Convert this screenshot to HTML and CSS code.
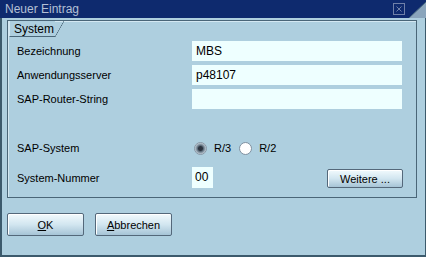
FILE: index.html
```html
<!DOCTYPE html>
<html lang="de">
<head>
    <meta charset="UTF-8">
    <title>Neuer Eintrag</title>
    <link rel="stylesheet" href="styles.css">
</head>
<body>
    <div class="window">
        <div class="title-bar">
            <span class="title">Neuer Eintrag</span>
            <span class="close-box">
                <svg width="12" height="12" viewBox="0 0 12 12">
                    <rect x="0.5" y="0.5" width="11" height="11" fill="none" stroke="#6f80a8"/>
                    <path d="M3.5 3.5 L8.5 8.5 M8.5 3.5 L3.5 8.5" stroke="#6f80a8" stroke-width="1"/>
                </svg>
            </span>
        </div>
        <svg class="corner" width="18" height="18" viewBox="0 0 18 18">
            <polygon points="18,2 18,18 1,18" fill="#8aa5bc"/>
            <line x1="18" y1="2" x2="1" y2="18" stroke="#4a6a80" stroke-width="1"/>
        </svg>

        <div class="content">
            <div class="group">
                <div class="tab">System</div>

                <div class="row">
                    <label>Bezeichnung</label>
                    <div class="field wide">MBS</div>
                </div>
                <div class="row">
                    <label>Anwendungsserver</label>
                    <div class="field wide">p48107</div>
                </div>
                <div class="row">
                    <label>SAP-Router-String</label>
                    <div class="field wide"></div>
                </div>

                <div class="row radio-row">
                    <label>SAP-System</label>
                    <div class="radios">
                        <span class="radio checked"></span><span class="radio-label">R/3</span>
                        <span class="radio"></span><span class="radio-label">R/2</span>
                    </div>
                </div>

                <div class="row number-row">
                    <label>System-Nummer</label>
                    <div class="field short">00</div>
                    <button class="btn more">Weitere ...</button>
                </div>
            </div>

            <div class="actions">
                <button class="btn"><u>O</u>K</button>
                <button class="btn"><u>A</u>bbrechen</button>
            </div>
        </div>
    </div>
</body>
</html>
```

FILE: styles.css
```css
* {
    margin: 0;
    padding: 0;
    box-sizing: border-box;
}
body {
    background: #aecfdf;
    font-family: "Liberation Sans", Arial, sans-serif;
    font-size: 11px;
    color: #000;
}
.window {
    position: relative;
    width: 426px;
    height: 257px;
    background: #aecfdf;
    border: 1px solid #3c5a6c;
    border-left-width: 2px;
    border-bottom-width: 2px;
    border-top: none;
}
.title-bar {
    height: 18px;
    margin-left: -2px;
    margin-right: -1px;
    background: #0e2a6e;
    display: flex;
    align-items: center;
    justify-content: space-between;
    padding: 0 21px 0 5px;
}
.title {
    font-size: 12px;
    color: #b4c0d6;
}
.close-box {
    display: flex;
}
.corner {
    position: absolute;
    top: 0;
    right: -1px;
}
.content {
    padding: 2px 8px 0 5px;
}
.group {
    height: 178px;
    border: 1px solid #4a6678;
    box-shadow: inset 1px 1px 0 #d4e8f2;
    padding: 0 13px 0 9px;
}
/* tab with a slanted right edge */
.tab {
    position: relative;
    width: 46px;
    height: 16px;
    margin-left: -8px;
    margin-bottom: 4px;
    padding-left: 4px;
    line-height: 16px;
    font-size: 12px;
    border-left: 1px solid #d4e8f2;
    border-bottom: 1px solid #4a6678;
    background: #aecfdf;
}
.tab::after {
    content: "";
    position: absolute;
    top: 0;
    right: -9px;
    width: 9px;
    height: 16px;
    background: linear-gradient(to bottom right, transparent calc(50% - 0.6px), #4a6678 50%, transparent calc(50% + 0.6px));
}
.row {
    display: flex;
    align-items: center;
    height: 20px;
    margin-bottom: 4px;
}
.row label {
    width: 175px;
}
.field {
    height: 20px;
    background: #eeffff;
    padding-left: 4px;
    line-height: 20px;
    font-size: 12px;
}
.field.wide {
    width: 210px;
}
.field.short {
    width: 21px;
    height: 21px;
    line-height: 21px;
    padding-left: 3px;
}
.radio-row {
    margin-top: 29px;
    margin-bottom: 9px;
}
.radios {
    display: flex;
    align-items: center;
    padding-left: 2px;
}
.radio {
    width: 13px;
    height: 13px;
    border-radius: 50%;
    background: #fff;
    border: 1px solid #7f90a0;
}
.radio.checked {
    background: radial-gradient(circle, #2c3440 0 2px, #5c6c7a 3px, #aab8c4 5px, #dce6ec 6px);
    border-color: #8898a6;
}
.radio-label {
    margin: 0 8px 0 7px;
}
.number-row {
    height: 21px;
}
.btn {
    font-family: "Liberation Sans", Arial, sans-serif;
    font-size: 11px;
    color: #000;
    height: 19px;
    border: 1px solid #54687a;
    border-radius: 2px;
    background: linear-gradient(#f2fafd, #d2e6f0 50%, #a6c4d6);
    box-shadow: inset 1px 1px 0 #fff;
}
.btn.more {
    width: 76px;
    margin-left: auto;
    margin-top: 2px;
}
.actions {
    display: flex;
    gap: 11px;
    margin-top: 15px;
}
.actions .btn {
    width: 77px;
    height: 23px;
}
```
